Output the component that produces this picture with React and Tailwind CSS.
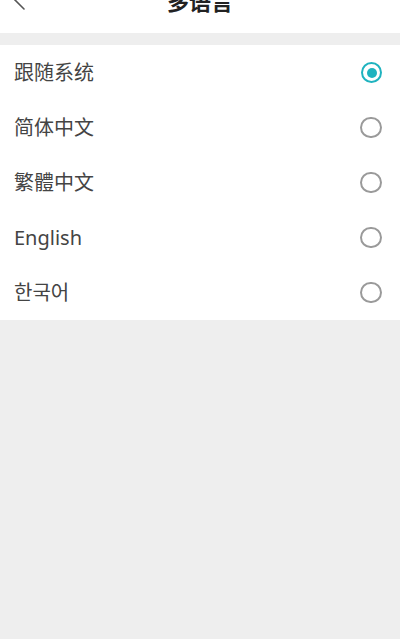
import React from "react";

const langs = [
  { label: "跟随系统", selected: true },
  { label: "简体中文" },
  { label: "繁體中文" },
  { label: "English" },
  { label: "한국어" },
];

function Radio({ selected }) {
  if (selected) {
    return (
      <div className="w-[21px] h-[21px] rounded-full border-[2.5px] border-[#1fb3bf] flex items-center justify-center">
        <div className="w-[10px] h-[10px] rounded-full bg-[#1fb3bf]" />
      </div>
    );
  }
  return <div className="w-[22px] h-[21px] rounded-full border-2 border-[#9a9a9a]" />;
}

export default function App() {
  return (
    <div
      className="w-[400px] h-[639px] bg-[#eeeeee] flex flex-col overflow-hidden"
      style={{ fontFamily: '"Noto Sans", "Noto Sans CJK SC", "Noto Sans CJK KR", sans-serif' }}
    >
      <div className="h-[33px] bg-white overflow-hidden shrink-0">
        <div className="-mt-[17px] h-[36px] grid grid-cols-[48px_1fr_48px] items-center">
          <div className="pl-[12px] -mt-[4px] flex items-center">
            <svg width="14" height="22" viewBox="0 0 14 22" fill="none">
              <path d="M12 1 L2 11 L12 21" stroke="#555" strokeWidth="1.6" strokeLinecap="round" strokeLinejoin="round" />
            </svg>
          </div>
          <div className="text-center text-[22px] leading-[36px] font-semibold text-[#222]">多语言</div>
          <div />
        </div>
      </div>
      <div className="h-[12px] shrink-0" />
      <div className="bg-white flex flex-col shrink-0">
        {langs.map((l) => (
          <div key={l.label} className="h-[55px] flex items-center justify-between pl-[14px] pr-[18px]">
            <span className="text-[20px] text-[#444]">{l.label}</span>
            <Radio selected={l.selected} />
          </div>
        ))}
      </div>
    </div>
  );
}
